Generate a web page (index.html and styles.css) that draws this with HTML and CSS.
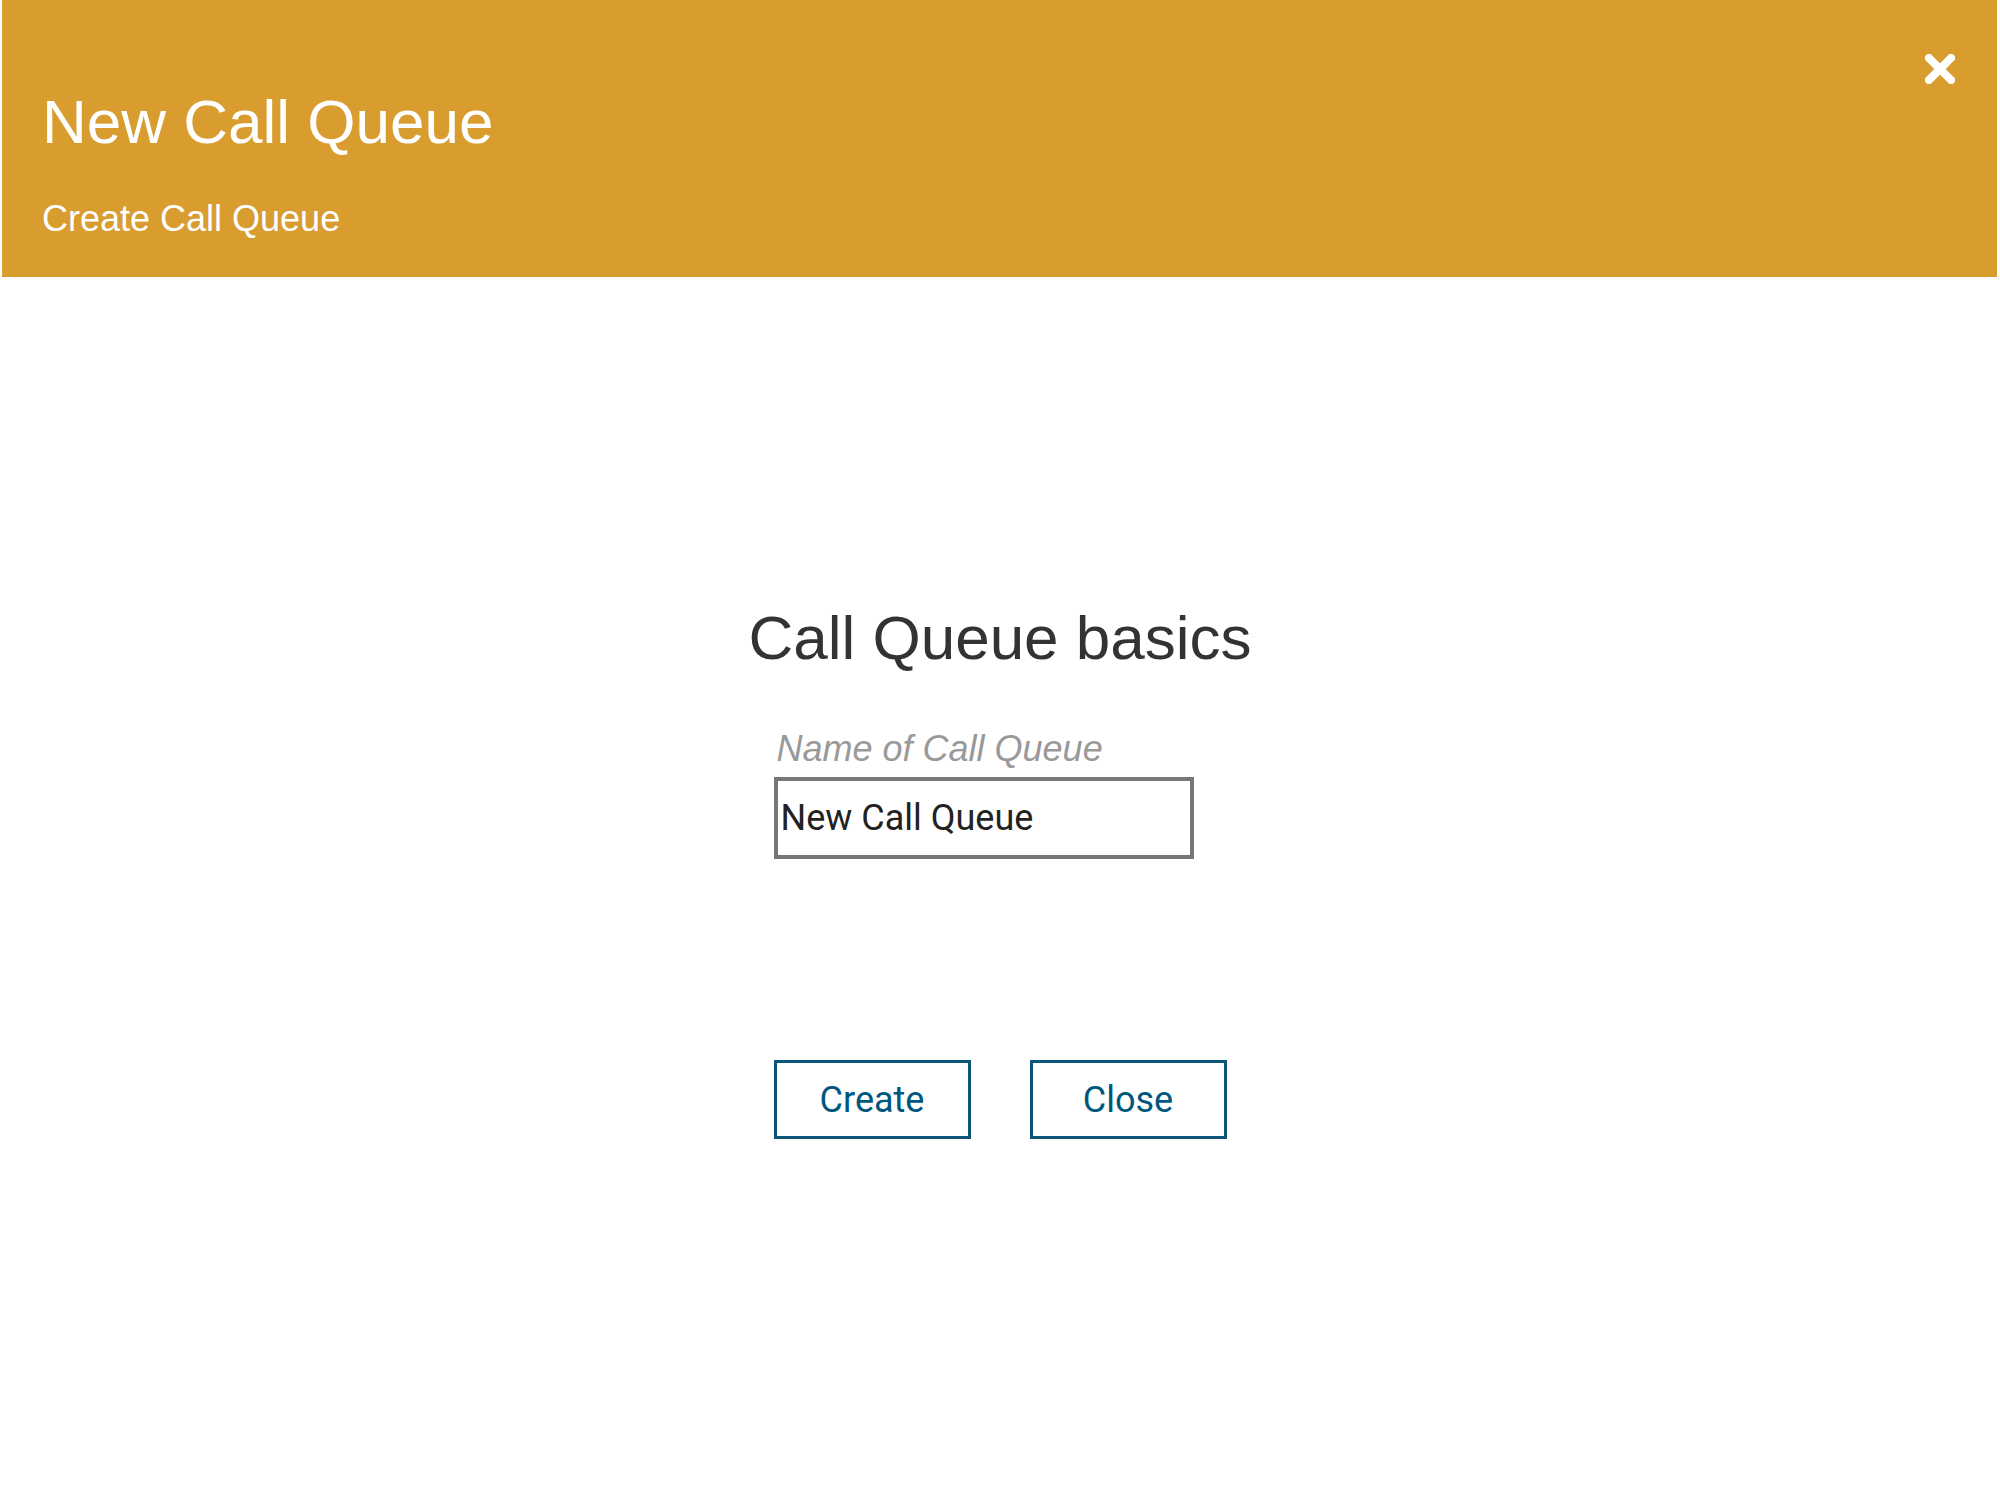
FILE: index.html
```html
<!DOCTYPE html>
<html>
<head>
  <title>New Call Queue</title>
  <meta charset="utf-8">
  <link rel="stylesheet" href="styles.css">
</head>
<body>
  <div class="panel-head">
    <h1 class="panel-title">New Call Queue</h1>
    <p class="panel-sub">Create Call Queue</p>
    <a class="panel-close" href="#" title="Close">
      <svg width="30" height="30" viewBox="0 0 30 30">
        <path d="M4 4 L26 26 M26 4 L4 26" stroke="#fff" stroke-width="8" stroke-linecap="square" fill="none"/>
      </svg>
    </a>
  </div>
  <div class="panel-body">
    <h2 class="section-title">Call Queue basics</h2>
    <div class="form">
      <label class="field-label" for="queue-name">Name of Call Queue</label>
      <input class="field-input" id="queue-name" type="text" value="New Call Queue">
      <div class="actions">
        <button class="btn">Create</button>
        <button class="btn">Close</button>
      </div>
    </div>
  </div>
</body>
</html>
```

FILE: styles.css
```css
body {
  margin: 0;
  background: #fff;
  font-family: "Liberation Sans", Arial, sans-serif;
}
.panel-head {
  position: relative;
  margin: 0 3px 0 2px;
  height: 277px;
  padding: 86px 40px 0;
  box-sizing: border-box;
  background: #d89c2f;
  color: #fff;
}
.panel-title {
  margin: 0;
  font-size: 62px;
  line-height: 72px;
  font-weight: normal;
}
.panel-sub {
  margin: 41px 0 0;
  font-size: 36px;
  line-height: 40px;
}
.panel-close {
  position: absolute;
  top: 54px;
  right: 42px;
  width: 30px;
  height: 30px;
}
.panel-close svg {
  display: block;
}
.panel-body {
  padding-top: 325px;
}
.section-title {
  margin: 0;
  text-align: center;
  font-size: 62px;
  line-height: 72px;
  font-weight: normal;
  color: #333;
}
.form {
  width: 453px;
  margin: 54px auto 0;
}
.field-label {
  display: block;
  font-size: 36px;
  line-height: 42px;
  font-style: italic;
  color: #999;
  padding-left: 3px;
}
.field-input {
  display: block;
  margin-top: 7px;
  width: 420px;
  height: 82px;
  box-sizing: border-box;
  border: 4px solid #777;
  padding: 0 3px;
  font-family: Roboto, sans-serif;
  font-size: 36px;
  color: #222;
  outline: none;
}
.actions {
  display: flex;
  gap: 59px;
  margin-top: 201px;
}
.btn {
  width: 197px;
  height: 79px;
  box-sizing: border-box;
  border: 3px solid #0d5679;
  background: #fff;
  font-family: Roboto, sans-serif;
  font-size: 36px;
  color: #00577e;
  padding: 0;
}
```
